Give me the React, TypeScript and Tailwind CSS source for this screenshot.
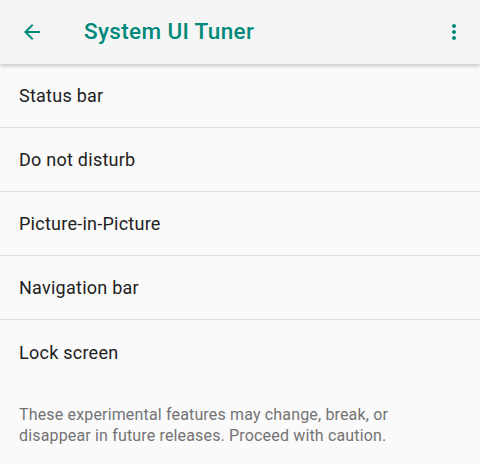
import React from "react";

const items = ["Status bar", "Do not disturb", "Picture-in-Picture", "Navigation bar", "Lock screen"];

export default function App() {
  return (
    <div className="w-[480px] h-[464px] bg-[#fafafa] overflow-hidden" style={{ fontFamily: "Roboto, 'Noto Sans', sans-serif" }}>
      <div className="relative z-10 h-16 bg-[#f5f5f5] flex items-center shadow-[0_2px_4px_rgba(0,0,0,0.2)]">
        <div className="w-[84px] flex items-center pl-[20px]">
          <svg width="24" height="24" viewBox="0 0 24 24" fill="#00897b">
            <path d="M20 11H7.83l5.59-5.59L12 4l-8 8 8 8 1.41-1.41L7.83 13H20v-2z" />
          </svg>
        </div>
        <div className="flex-1 text-[22.5px] tracking-[0.35px] font-medium text-[#00897b]">System UI Tuner</div>
        <div className="w-[50px] flex items-center justify-center pr-[2px]">
          <svg width="24" height="24" viewBox="0 0 24 24" fill="#00897b">
            <path d="M12 8c1.1 0 2-.9 2-2s-.9-2-2-2-2 .9-2 2 .9 2 2 2zm0 2c-1.1 0-2 .9-2 2s.9 2 2 2 2-.9 2-2-.9-2-2-2zm0 6c-1.1 0-2 .9-2 2s.9 2 2 2 2-.9 2-2-.9-2-2-2z" />
          </svg>
        </div>
      </div>
      <div>
        {items.map((t, i) => (
          <div
            key={t}
            className={`h-16 flex items-center pl-[19px] text-[18px] tracking-[0.25px] text-[#212121] ${i < items.length - 1 ? "border-b border-[#dedede]" : ""}`}
          >
            {t}
          </div>
        ))}
        <div className="pl-[19px] pr-4 pt-[20px] text-[16px] tracking-[0.16px] leading-[21px] text-[#737373]">
          These experimental features may change, break, or
          <br />
          disappear in future releases. Proceed with caution.
        </div>
      </div>
    </div>
  );
}
